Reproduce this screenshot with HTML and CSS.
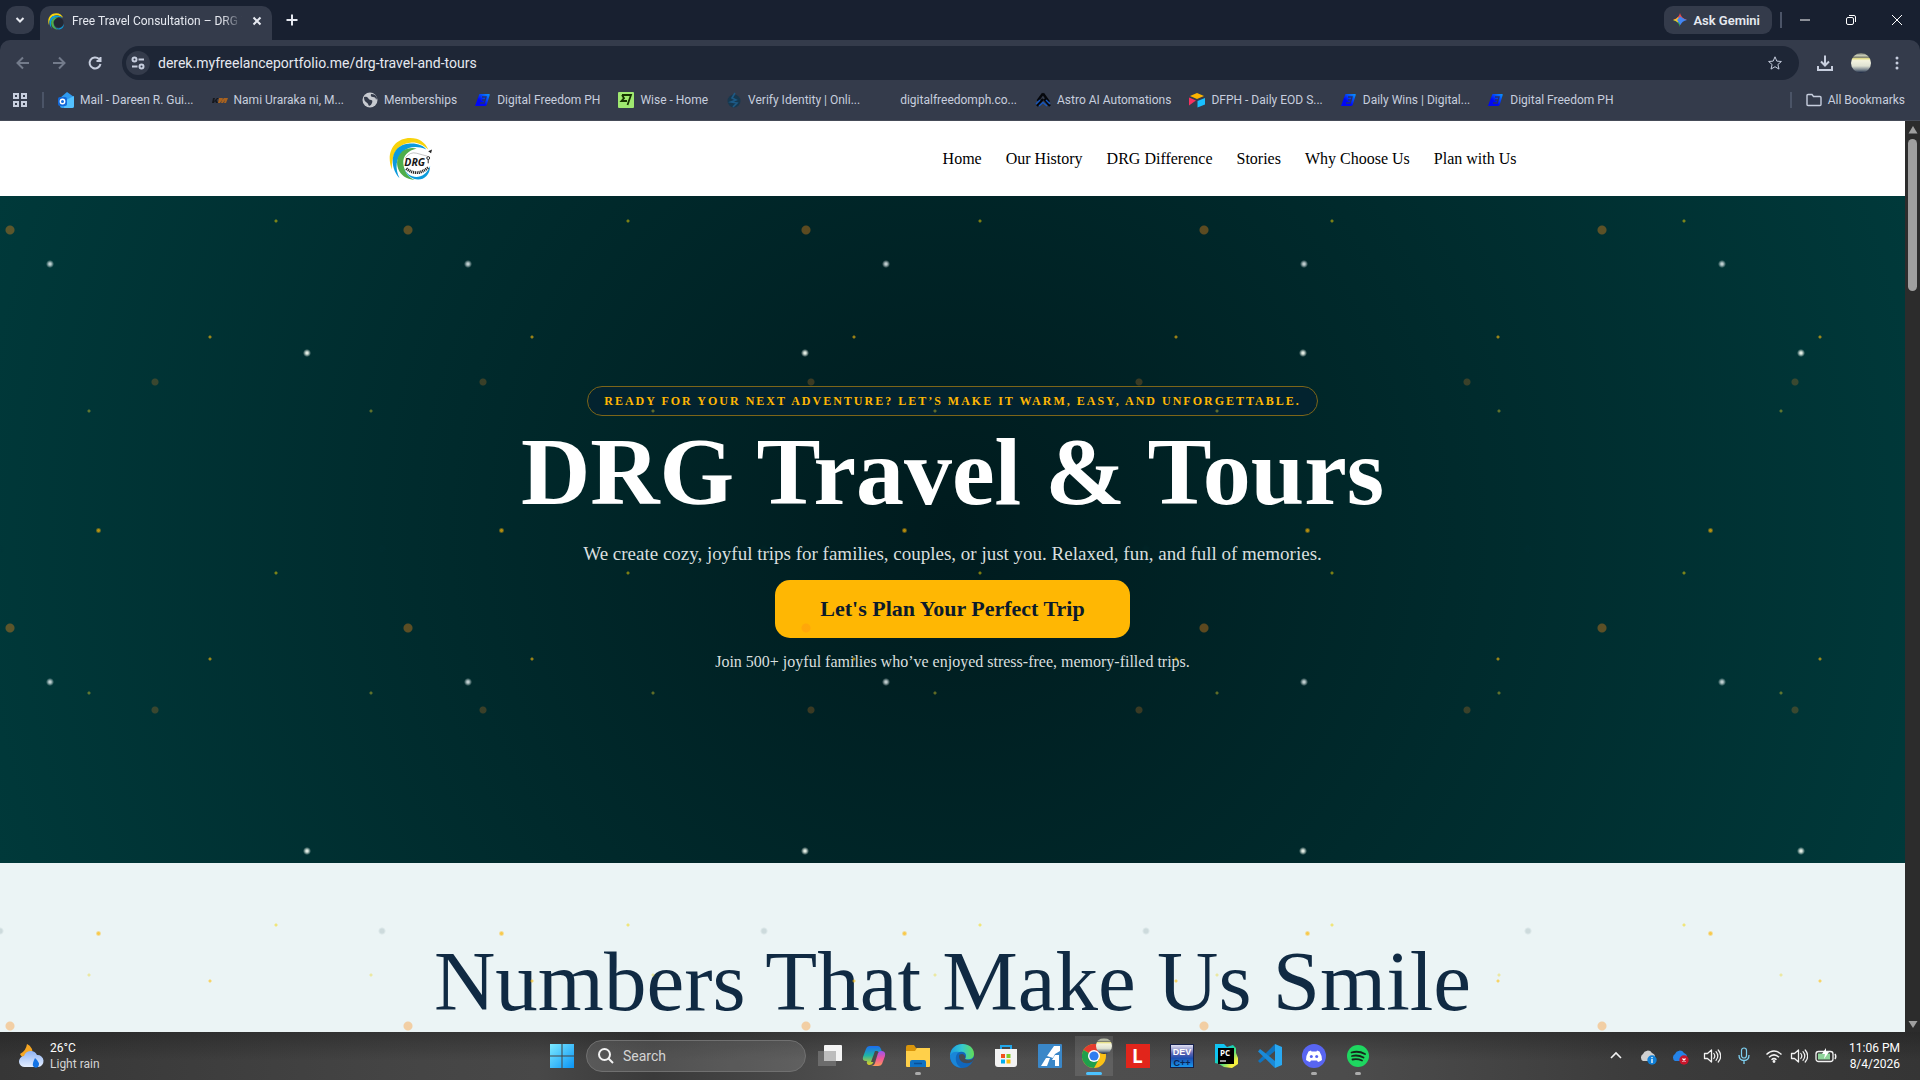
FILE: index.html
```html
<!DOCTYPE html>
<html lang="en">
  <head>
    <meta charset="utf-8">
    <title>Free Travel Consultation – DRG Travel &amp; Tours</title>
    <meta name="viewport" content="width=device-width, initial-scale=1">
    <link rel="stylesheet" href="styles.css">
  </head>
  <body>
    <!-- shared shapes -->
    <svg class="defs" width="0" height="0">
      <defs>
        <linearGradient id="blue" x1="0" y1="1" x2="1" y2="0"><stop offset=".4" stop-color="#0008f5"/><stop offset="1" stop-color="#0a9bff"/></linearGradient>
        <linearGradient id="win" x1="0" y1="0" x2="1" y2="1"><stop offset="0" stop-color="#7deaff"/><stop offset="1" stop-color="#0a94f5"/></linearGradient>
        <linearGradient id="planet" x1="0" y1="0" x2="0" y2="1"><stop offset="0" stop-color="#6d7168"/><stop offset=".12" stop-color="#c9cdb8"/><stop offset=".22" stop-color="#7d8070"/><stop offset=".28" stop-color="#e6e08a"/><stop offset=".38" stop-color="#f3f3df"/><stop offset=".65" stop-color="#dfe2d2"/><stop offset=".85" stop-color="#76828c"/><stop offset="1" stop-color="#14203c"/></linearGradient>
        <linearGradient id="cloud" x1="0" y1="0" x2="0" y2="1"><stop offset="0" stop-color="#8fb4f5"/><stop offset="1" stop-color="#e4eeff"/></linearGradient>
        <linearGradient id="edge" x1="0" y1="0" x2="1" y2="0"><stop offset="0" stop-color="#1b9de2"/><stop offset=".5" stop-color="#35c7d0"/><stop offset="1" stop-color="#62dd55"/></linearGradient>
        <linearGradient id="cop1" x1="0" y1="0" x2="0" y2="1"><stop offset="0" stop-color="#1c6cf0"/><stop offset=".5" stop-color="#1fb5a6"/><stop offset="1" stop-color="#e6cf1b"/></linearGradient>
        <linearGradient id="cop2" x1="0" y1="0" x2="0" y2="1"><stop offset="0" stop-color="#9a54f0"/><stop offset=".5" stop-color="#f0569a"/><stop offset="1" stop-color="#ff9a5a"/></linearGradient>
        <linearGradient id="dev" x1="0" y1="0" x2="0" y2="1"><stop offset="0" stop-color="#e8e8f8"/><stop offset=".4" stop-color="#5a62b0"/><stop offset=".6" stop-color="#1b4fb0"/><stop offset="1" stop-color="#1a9cf0"/></linearGradient>
        <linearGradient id="pyc" x1="0" y1="0" x2="1" y2="1"><stop offset=".3" stop-color="#10c4f2"/><stop offset=".5" stop-color="#20d890"/><stop offset=".8" stop-color="#f6f040"/></linearGradient>
        <symbol id="df" viewBox="0 0 16 16">
          <path d="M5 2h9q1 0 .7 1l-3 10q-.5 1-2 1H0L4 3q.3-1 1-1z" fill="url(#blue)"/>
          <path d="M7 5h4l-.8 3H7m3 0-.8 3H5" fill="none" stroke="#25306e" stroke-width="1.400"/>
        </symbol>
        <symbol id="speaker" viewBox="0 0 18 18">
          <path d="M1.500 6.500h3L8.500 3v12l-4-3.500h-3z" fill="none" stroke="#f2f2f2" stroke-width="1.300" stroke-linejoin="round"/>
          <path d="M10.800 6.500q2 2.500 0 5M13 4.700q3.600 4.300 0 8.600M15.200 3q5 6 0 12" fill="none" stroke="#f2f2f2" stroke-width="1.200" stroke-linecap="round"/>
        </symbol>
        <symbol id="swirl" viewBox="0 0 46 46">
          <path d="M3 34C-4 16 6 1 22 1c10 0 16 5 19 12C34 7 28 5 22 6 8 8 3 18 3 34z" fill="#f8d30c"/>
          <path d="M11 43C0 31 1 9 20 7c9-1 16 2 19 6-10-4-18-3-24 2-8 7-9 18-4 28z" fill="#0c9bdc"/>
          <path d="M27 45C9 44 3 25 14 15c5-4 11-4 15-3-9 2-15 8-14 16 1 9 6 15 12 17z" fill="#4fae4b"/>
          <path d="M15 31c5 14 22 15 28-1 0 18-22 20-28 1z" fill="#0c9bdc"/>
        </symbol>
      </defs>
    </svg>

    <header class="browser">
      <div class="tabs">
        <button class="tab-search" aria-label="Search tabs"><svg width="10" height="10" viewBox="0 0 10 10"><path d="M1.500 3 5 6.500 8.500 3"/></svg></button>
        <div class="tab">
          <svg class="tab-icon" width="17" height="17" viewBox="0 0 46 46"><circle cx="29" cy="26" r="13" fill="#232833"/><use href="#swirl"/></svg>
          <span class="tab-title">Free Travel Consultation – DRG Travel</span>
          <button class="tab-close" aria-label="Close tab"><svg width="10" height="10" viewBox="0 0 10 10"><path d="m1.500 1.500 7 7m0-7-7 7"/></svg></button>
        </div>
        <button class="tab-new" aria-label="New tab"><svg width="12" height="12" viewBox="0 0 12 12"><path d="M6 .500v11M.500 6h11"/></svg></button>
        <div class="window-controls">
          <button class="gemini">
            <svg width="14" height="14" viewBox="0 0 14 14"><path d="M7 0q1 5 7 7H0q6-2 7-7z" fill="#ea4a4a"/><path d="M0 7h7v7q-1-5-7-7z" fill="#34a853"/><path d="M0 7q4-1 5-3l2 3-2 2.500Q3 7.500 0 7z" fill="#f5c02c"/><path d="M7 3.500 9.500 5q2 1.500 4.500 2-5 1-6.500 5L4 7z" fill="#4285f4"/></svg>
            Ask Gemini
          </button>
          <i class="divider"></i>
          <button class="win" aria-label="Minimize"><svg width="12" height="12" viewBox="0 0 12 12"><path d="M1 6h10"/></svg></button>
          <button class="win" aria-label="Restore"><svg width="12" height="12" viewBox="0 0 12 12"><rect x="1.500" y="3.500" width="7" height="7" rx="1.500"/><path d="M4 1.500h5q1.500 0 1.500 1.500v5"/></svg></button>
          <button class="win" aria-label="Close"><svg width="12" height="12" viewBox="0 0 12 12"><path d="m1 1 10 10M11 1 1 11"/></svg></button>
        </div>
      </div>

      <div class="toolbar">
        <button class="tool dim" aria-label="Back"><svg width="16" height="16" viewBox="0 0 16 16"><path d="M14 8H3m5-5.500L2.500 8 8 13.500"/></svg></button>
        <button class="tool dim" aria-label="Forward"><svg width="16" height="16" viewBox="0 0 16 16"><path d="M2 8h11M8 2.500 13.500 8 8 13.500"/></svg></button>
        <button class="tool" aria-label="Reload"><svg width="16" height="16" viewBox="0 0 16 16"><path d="M13.500 9A5.500 5.500 0 1 1 12 4l1.500 1.500M13.500 2v4h-4"/></svg></button>
        <div class="address">
          <button class="site-info" aria-label="Site information"><svg width="16" height="16" viewBox="0 0 16 16"><circle cx="4.500" cy="4.500" r="2"/><path d="M8.500 4.500H14M2 11.500h5.500"/><circle cx="11.500" cy="11.500" r="2"/></svg></button>
          <input type="text" aria-label="Address" value="derek.myfreelanceportfolio.me/drg-travel-and-tours">
          <button class="tool star" aria-label="Bookmark this tab"><svg width="16" height="16" viewBox="0 0 16 16"><path d="m8 1.800 1.800 4.300 4.600.4-3.500 3 1.100 4.600L8 11.700l-4 2.400 1.100-4.600-3.500-3 4.600-.4z"/></svg></button>
        </div>
        <div class="actions">
          <button class="tool" aria-label="Downloads"><svg width="18" height="18" viewBox="0 0 18 18"><path d="M9 1.500v9.500M5 7.500l4 4 4-4M2 12v4h14v-4"/></svg></button>
          <button class="tool" aria-label="Profile"><svg width="20" height="20" viewBox="0 0 20 20"><circle cx="10" cy="10" r="10" fill="url(#planet)" stroke="none"/></svg></button>
          <button class="tool" aria-label="Menu"><svg width="16" height="16" viewBox="0 0 16 16"><g fill="#c7cede" stroke="none"><circle cx="8" cy="3" r="1.500"/><circle cx="8" cy="8" r="1.500"/><circle cx="8" cy="13" r="1.500"/></g></svg></button>
        </div>
      </div>

      <nav class="bookmarks" aria-label="Bookmarks">
        <button class="apps" aria-label="Apps"><svg width="14" height="14" viewBox="0 0 14 14"><path d="M1 1h4v4H1zM9 1h4v4H9zM1 9h4v4H1zM9 9h4v4H9z"/></svg></button>
        <i class="divider"></i>
        <a href="#"><svg viewBox="0 0 16 16"><path d="M2 6 9 0l7 5v9q0 2-2 2H4q-2 0-2-2z" fill="#2f9bf0"/><path d="m8 8 8-4v10q0 2-2 2H6z" fill="#53c1ff"/><rect y="5" width="9" height="9" rx="2" fill="#1268d8"/><circle cx="4.500" cy="9.500" r="2.200" fill="none" stroke="#fff" stroke-width="1.400"/></svg><span>Mail - Dareen R. Gui...</span></a>
        <a href="#"><svg viewBox="0 0 16 16"><path d="M1 6h2l-1 3 3-3h2L4.500 8 6 11H4L3 9l-1 2H0z" fill="#15171c"/><path d="M7 6h4l-1 2 2-2h4l-2 5h-2l1-3-2 3H9l1-3-2 3H6z" fill="#a8621f"/></svg><span>Nami Uraraka ni, M...</span></a>
        <a href="#"><svg viewBox="0 0 16 16"><circle cx="8" cy="8" r="7.500" fill="#c7cad0"/><path d="M2 5q3-1 4 1t3 2 1 3-3 3q-1-3-3-4T2 5zM9 2q-1 3 2 3t3 3l1-2q-1-4-6-4z" fill="#343b4b"/></svg><span>Memberships</span></a>
        <a href="#"><svg><use href="#df"/></svg><span>Digital Freedom PH</span></a>
        <a href="#"><svg viewBox="0 0 16 16"><rect width="16" height="16" rx="1" fill="#9fe870"/><path d="M4 3h9l-3.500 10M4 3l2 3.200L3.500 9H9" fill="none" stroke="#163300" stroke-width="1.800"/></svg><span>Wise - Home</span></a>
        <a href="#"><svg viewBox="0 0 16 16"><circle cx="8" cy="9" r="6.500" fill="#17384f"/><path d="M9 1 6 6l4 2-5 2 6 1-4 4" fill="none" stroke="#1d5a86" stroke-width="1.600"/></svg><span>Verify Identity | Onli...</span></a>
        <a href="#"><svg></svg><span>digitalfreedomph.co...</span></a>
        <a href="#"><svg viewBox="0 0 16 16"><path d="M8 1.500 2.500 9M8 1.500 14 10M8 7l-6 7M9 7l6 7" fill="none" stroke="#05070c" stroke-width="2.400"/><path d="m1 12 4-4m-1 6 4-3.500 4 3.500m-1-6 4 4" fill="none" stroke="#1557c0" stroke-width="1.400"/></svg><span>Astro AI Automations</span></a>
        <a href="#"><svg viewBox="0 0 16 16"><path d="m1 4 7-3 7 3-7 3z" fill="#fcb400"/><path d="M0 5.500 7 8.500l-7 5z" fill="#f8305f"/><path d="m8.500 9 7.500-3v6.500l-7.500 3z" fill="#18bfff"/></svg><span>DFPH - Daily EOD S...</span></a>
        <a href="#"><svg><use href="#df"/></svg><span>Daily Wins | Digital...</span></a>
        <a href="#"><svg><use href="#df"/></svg><span>Digital Freedom PH</span></a>
        <i class="divider push"></i>
        <a class="all" href="#"><svg viewBox="0 0 16 16"><path d="M1 3.500q0-1 1-1h4l1.500 2H14q1 0 1 1v7q0 1-1 1H2q-1 0-1-1z" fill="none" stroke="#c7cede" stroke-width="1.400"/></svg><span>All Bookmarks</span></a>
      </nav>
    </header>

    <div class="viewport">
      <div class="page">
        <div class="site-header">
          <div class="container">
            <a class="logo" href="#" aria-label="DRG Travel and Tours">
              <svg width="44" height="44" viewBox="0 0 46 46">
                <use href="#swirl"/>
                <path d="M17 22q5-7 12-5t11 3" fill="none" stroke="#999" stroke-width=".6"/>
                <text class="logo-name" x="16" y="30">DRG</text>
                <path d="M18 33q11 9 23-1" fill="none" stroke="#222" stroke-width="3" stroke-dasharray="1.200 .8"/>
                <circle cx="41" cy="22" r="1.500" fill="none" stroke="#222"/><path d="M41 23.500v4" stroke="#222"/><path d="m41 15 4-2-1 4z" fill="#222"/>
              </svg>
            </a>
            <nav class="menu">
              <a href="#">Home</a>
              <a href="#">Our History</a>
              <a href="#">DRG Difference</a>
              <a href="#">Stories</a>
              <a href="#">Why Choose Us</a>
              <a href="#">Plan with Us</a>
            </nav>
          </div>
        </div>

        <section class="hero">
          <p class="badge">Ready for your next adventure? Let’s make it warm, easy, and unforgettable.</p>
          <h1>DRG Travel &amp; Tours</h1>
          <p class="lead">We create cozy, joyful trips for families, couples, or just you. Relaxed, fun, and full of memories.</p>
          <button class="cta">Let's Plan Your Perfect Trip</button>
          <p class="note">Join 500+ joyful families who’ve enjoyed stress-free, memory-filled trips.</p>
        </section>

        <section class="numbers">
          <h2>Numbers That Make Us Smile</h2>
        </section>
      </div>
      <div class="scrollbar">
        <svg width="10" height="10" viewBox="0 0 10 10"><path d="M5 1 9.500 8.500h-9z"/></svg>
        <div class="thumb"></div>
        <svg class="down" width="10" height="10" viewBox="0 0 10 10"><path d="M5 9 9.500 2h-9z"/></svg>
      </div>
    </div>

    <footer class="taskbar">
      <button class="weather">
        <svg width="26" height="26" viewBox="0 0 26 26">
          <path d="M9 1q-1 7-7 10 2 5 8 4 6-4 4-9-2-4-5-5z" fill="#f5a623"/>
          <path d="M7 24a5.500 5.500 0 0 1-1-11 7 7 0 0 1 13-1 6 6 0 0 1 1 12z" fill="url(#cloud)"/>
          <path d="M17 15q6 5 3 9-3 2-5-1-1-2 2-8z" fill="#1273e6"/>
        </svg>
        <span class="weather-text"><b>26°C</b><span>Light rain</span></span>
      </button>

      <div class="dock">
        <button aria-label="Start"><svg viewBox="0 0 24 24"><path d="M0 0h11.500v11.500H0zM12.500 0H24v11.500H12.500zM0 12.500h11.500V24H0zM12.500 12.500H24V24H12.500z" fill="url(#win)"/></svg></button>
        <label class="search">
          <svg width="16" height="16" viewBox="0 0 16 16"><circle cx="6.500" cy="6.500" r="5.500"/><path d="m10.500 10.500 4.500 4.500"/></svg>
          <input type="search" placeholder="Search">
        </label>
        <button aria-label="Task view"><svg viewBox="0 0 24 24"><rect x="6" y="1" width="18" height="16" rx="1" fill="#f5f5f5"/><path d="M0 7h18v15H0z" fill="#777" opacity=".75"/><path d="M6 7h12v10H6z" fill="#bdbdbd"/></svg></button>
        <button aria-label="Copilot"><svg viewBox="0 0 24 24"><path d="M8 2h8q2 0 3 3l1 3h-5L11 19q-1 2-4 2-3-1-2-4H4q-4 0-3-4L4 5q1-3 4-3z" fill="url(#cop1)"/><path d="M16 22H9q3 0 4-3l3-10q1-2 3-2 5 0 4 5l-3 8q-1 2-4 2z" fill="url(#cop2)"/><path d="M13 7h3L12 18H9z" fill="#4a4a4a"/></svg></button>
        <button class="open" aria-label="File Explorer"><svg viewBox="0 0 24 24"><path d="M0 3q0-2 2-2h6l2 3h12q2 0 2 2v4H0z" fill="#d9950b"/><path d="M0 7h9l2-3h13v18q0 1-1 1H1q-1 0-1-1z" fill="#ffd04a"/><path d="M4 23v-5q0-2 2-2h12q2 0 2 2v5z" fill="#0f72c4"/><path d="M8 19.500h8" stroke="#0a4f96" stroke-width="1.500"/></svg></button>
        <button aria-label="Edge"><svg viewBox="0 0 24 24"><circle cx="12" cy="12" r="12" fill="#1167bd"/><path d="M0 12C1-4 24-3 24 10c0 5-5 6-9 5 3-5-1-8-5-7-6 0-9 3-10 4z" fill="url(#edge)"/><path d="M9 12c0 6 6 9 13 6l2-3q1-1 0-2c-2 4-6 4-9 2 1-3-1-5-3-5q-3 0-3 2z" fill="#454b52"/><path d="M0 12c1-4 5-5 9-4-5 3-4 13 2 15.500C5 24 0 18 0 12z" fill="#1a86d8"/></svg></button>
        <button aria-label="Store"><svg viewBox="0 0 24 24"><path d="M7 6V2h10v4" fill="none" stroke="#21a6ea" stroke-width="2"/><path d="M1 5h22v15q0 3-3 3H4q-3 0-3-3z" fill="#f3f3f3"/><path d="M7 10h4v4H7z" fill="#f1511b"/><path d="M12.500 10h4v4h-4z" fill="#80cc28"/><path d="M7 15.500h4v4H7z" fill="#00adef"/><path d="M12.500 15.500h4v4h-4z" fill="#fbbc09"/></svg></button>
        <button aria-label="Drafting"><svg viewBox="0 0 24 24"><rect width="24" height="24" rx="1" fill="#3a87c8"/><path d="m3 22 5-8h4l-3 8zM9 12 16 2h6v5l-5 3-2 4z" fill="#fff"/><path d="m14 16 3-5h4v11h-4v-6z" fill="#fff"/></svg></button>
        <button class="active" aria-label="Chrome"><svg viewBox="0 0 24 24"><circle cx="12" cy="12" r="12" fill="#fbc116"/><path d="M1.600 6A12 12 0 0 1 22.400 6L12 12z" fill="#e33b2e"/><path d="M22.400 6H12v6z" fill="#e33b2e"/><path d="M1.600 6A12 12 0 0 0 12 24l5-9-5-3z" fill="#1fa04c"/><circle cx="12" cy="12" r="6" fill="#fff"/><circle cx="12" cy="12" r="4.600" fill="#2f7df0"/></svg><svg class="profile" viewBox="0 0 20 20"><circle cx="10" cy="10" r="10" fill="url(#planet)"/></svg></button>
        <button aria-label="L"><svg viewBox="0 0 24 24"><path d="M0 0h24v24H0z" fill="#e1251b"/><text x="6" y="19" class="glyph-l">L</text></svg></button>
        <button aria-label="Dev-C++"><svg viewBox="0 0 24 24"><rect x=".5" y=".5" width="23" height="23" fill="url(#dev)" stroke="#15204a"/><text x="12" y="11" class="glyph-dev">DEV</text><text x="12" y="22" class="glyph-cpp">C++</text></svg></button>
        <button aria-label="PyCharm"><svg viewBox="0 0 24 24"><path d="M1 0h9l3 3 6-2 3 3v5l2 5v6l-6 4-8-1-5-3-4-1z" fill="url(#pyc)"/><path d="M4 4h16v16H4z" fill="#000"/><text x="6" y="12" class="glyph-pc">PC</text><path d="M6 17h6" stroke="#fff" stroke-width="1.200"/></svg></button>
        <button aria-label="Visual Studio Code"><svg viewBox="0 0 24 24"><path d="m17 0 7 3v18l-7 3z" fill="#29a9f2"/><path d="M17 0v7L4 17.500 2 19l-2-2z" fill="#0f74c0"/><path d="M17 24v-7L4 6.500 2 5 0 7.500z" fill="#1a8ad8"/></svg></button>
        <button class="open" aria-label="Discord"><svg viewBox="0 0 24 24"><circle cx="12" cy="12" r="12" fill="#5865f2"/><path d="M9 6.500 6.500 7.500Q4 11.500 4 16q2 1.500 4 2l1-1.500h6l1 1.500q2-.5 4-2 0-4.500-2.500-8.500L15 6.500l-.5 1h-5z" fill="#fff"/><circle cx="9.300" cy="12.500" r="1.500" fill="#5865f2"/><circle cx="14.700" cy="12.500" r="1.500" fill="#5865f2"/></svg></button>
        <button class="open" aria-label="Spotify"><svg viewBox="0 0 24 24"><circle cx="12" cy="12" r="11" fill="#1ed760"/><path d="M5.500 8.500q7-2 13.500 1.500M6 12q6-1.500 11.500 1.500M6.500 15.500q5-1 9.500 1" fill="none" stroke="#16261b" stroke-width="1.800" stroke-linecap="round"/></svg></button>
      </div>

      <div class="tray">
        <button aria-label="Hidden icons"><svg viewBox="0 0 18 18"><path d="m4 11 5-5 5 5" fill="none" stroke="#f2f2f2" stroke-width="1.600"/></svg></button>
        <button aria-label="Cloud sync"><svg viewBox="0 0 18 18"><path d="M4 14a4 4 0 0 1 0-7 5 5 0 0 1 9-1q3 1 3 4t-3 4z" fill="#d0d0d0"/><circle cx="13" cy="13" r="4.700" fill="#1080d8"/><path d="M13 12v4m0-6v1.200" stroke="#fff" stroke-width="1.300"/></svg></button>
        <button aria-label="OneDrive"><svg viewBox="0 0 18 18"><path d="M4 14a4 4 0 0 1 0-7 5 5 0 0 1 9-1q3 1 3 4t-3 4z" fill="#2483e8"/><circle cx="13" cy="13" r="4.700" fill="#c8152b"/><path d="m11.500 11.500 3 3m0-3-3 3" stroke="#fff" stroke-width="1.200"/></svg></button>
        <button aria-label="Sound"><svg><use href="#speaker"/></svg></button>
        <button aria-label="Microphone"><svg viewBox="0 0 18 18"><rect x="6.500" y="1" width="5" height="10" rx="2.500" fill="none" stroke="#7fd0f0" stroke-width="1.200"/><path d="M4 8q0 5.500 5 5.500T14 8M9 13.500V17" fill="none" stroke="#7fd0f0" stroke-width="1.300"/></svg></button>
        <button class="status" aria-label="Network, volume and battery">
          <svg viewBox="0 0 18 18"><path d="M1.500 7.500q7.500-7 15 0M4 10.200q5-4.600 10 0M6.500 12.800q2.500-2.300 5 0" fill="none" stroke="#f2f2f2" stroke-width="1.500"/><circle cx="9" cy="14.500" r="1.400" fill="#f2f2f2"/></svg>
          <svg><use href="#speaker"/></svg>
          <svg class="battery" viewBox="0 0 22 18"><rect x="1" y="4.500" width="17" height="10" rx="2.500" fill="none" stroke="#f2f2f2" stroke-width="1.300"/><path d="M3 6.500h12v6H3z" fill="#8fd49a"/><path d="M20 7q1.500 2.500 0 5" stroke="#f2f2f2" fill="none" stroke-width="1.500"/><path d="m11 1-4 6h3l-1 5 5-7h-3z" fill="#fff"/></svg>
        </button>
        <button class="clock"><span>11:06 PM</span><span>8/4/2026</span></button>
      </div>
    </footer>
  </body>
</html>
```
FILE: styles.css
```css
* {
  box-sizing: border-box;
}
body {
  margin: 0;
  height: 100vh;
  overflow: hidden;
  display: flex;
  flex-direction: column;
  font-family: Roboto, 'Open Sans', sans-serif;
  font-size: 12px;
  color: #e6e9f0;
  background: #182030;
}
button {
  display: flex;
  align-items: center;
  justify-content: center;
  padding: 0;
  border: 0;
  background: none;
  color: inherit;
  font: inherit;
}
input {
  min-width: 0;
  flex: 1;
  padding: 0;
  border: 0;
  outline: 0;
  background: none;
  color: inherit;
  font: inherit;
}
a {
  color: inherit;
  text-decoration: none;
}
svg {
  display: block;
  flex: none;
}
p, h1, h2 {
  margin: 0;
}
.defs {
  position: absolute;
}
.divider {
  width: 2px;
  height: 16px;
  background: #4b5467;
}

/* browser */
.tabs {
  display: flex;
  align-items: center;
  height: 40px;
  padding-left: 6px;
}
.tabs svg path {
  fill: none;
  stroke: #e6e9f0;
  stroke-width: 2px;
}
.tab-search {
  width: 28px;
  height: 28px;
  border-radius: 10px;
  background: #343b4b;
}
.tab {
  display: flex;
  align-items: center;
  align-self: flex-end;
  width: 232px;
  height: 34px;
  margin-left: 6px;
  padding: 0 10px 4px 8px;
  border-radius: 10px 10px 0 0;
  background: #343b4b;
}
.tabs .tab-icon path {
  fill: revert-layer;
  stroke: none;
}
.tab-title {
  flex: 1;
  margin: 0 10px 0 7px;
  overflow: hidden;
  white-space: nowrap;
  -webkit-mask-image: linear-gradient(90deg, #000 88%, transparent);
          mask-image: linear-gradient(90deg, #000 88%, transparent);
}
.tab-new {
  width: 28px;
  height: 28px;
  margin-left: 6px;
}
.window-controls {
  display: flex;
  align-items: center;
  margin-left: auto;
}
.gemini {
  gap: 6px;
  height: 28px;
  padding: 0 12px 0 9px;
  margin-right: 8px;
  border-radius: 9px;
  background: #343b4b;
  font-size: 13px;
  font-weight: 600;
}
.tabs .gemini path {
  fill: revert-layer;
  stroke: none;
}
.win {
  width: 46px;
  height: 40px;
}
.tabs .win path,
.tabs .win rect {
  fill: none;
  stroke: #fff;
  stroke-width: 1px;
}
.toolbar {
  display: flex;
  align-items: center;
  height: 46px;
  padding: 0 5px;
  border-radius: 10px 10px 0 0;
  background: #343b4b;
}
.tool {
  width: 36px;
  height: 34px;
}
.toolbar svg {
  stroke: #c7cede;
  stroke-width: 2px;
  fill: none;
}
.toolbar .dim svg {
  stroke: #737b8b;
}
.address {
  flex: 1;
  display: flex;
  align-items: center;
  height: 34px;
  margin-left: 9px;
  padding: 0 6px 0 4px;
  border-radius: 17px;
  background: #1e2636;
  font-size: 14px;
}
.address .star svg {
  stroke-width: 1px;
}
.site-info {
  width: 24px;
  height: 24px;
  margin-right: 8px;
  border-radius: 12px;
  background: #343b4b;
}
.actions {
  display: flex;
  margin-left: 8px;
}
.bookmarks {
  display: flex;
  align-items: center;
  height: 35px;
  padding: 0 15px 6px 13px;
  background: #343b4b;
  border-bottom: 1px solid #454b58;
  color: #c7cede;
  white-space: nowrap;
}
.bookmarks a {
  display: flex;
  align-items: center;
  gap: 6px;
  margin-right: 18px;
}
.bookmarks a svg {
  width: 16px;
  height: 16px;
}
.apps svg {
  fill: none;
  stroke: #c7cede;
  stroke-width: 2px;
}
.bookmarks .divider {
  margin: 0 14px 0 15px;
}
.bookmarks .push {
  margin-left: auto;
}
.bookmarks .all {
  margin-right: 0;
}

/* page */
.viewport {
  flex: 1;
  display: flex;
  min-height: 0;
}
.page {
  position: relative;
  flex: 1;
  overflow: hidden;
  background: #ebf4f5;
  font-family: 'Liberation Serif', serif;
}
/* confetti dots, every layer repeats at its own pace */
.page::after {
  content: '';
  position: absolute;
  top: 0;
  left: 0;
  right: 0;
  bottom: 0;
  pointer-events: none;
  background-image:
    radial-gradient(circle, rgba(255, 140, 20, .36) 4px, transparent 5px),
    radial-gradient(circle, rgba(235, 244, 245, .8) 1px, transparent 4px),
    radial-gradient(circle, rgba(235, 244, 235, .95) 1px, transparent 4px),
    radial-gradient(circle, rgba(255, 183, 3, .7) 1px, transparent 3px),
    radial-gradient(circle, rgba(245, 215, 0, .5) 1px, transparent 2px),
    radial-gradient(circle, rgba(255, 190, 10, .6) 1px, transparent 2px),
    radial-gradient(circle, rgba(230, 130, 30, .25) 3px, transparent 4px),
    radial-gradient(circle, rgba(235, 215, 40, .4) 1px, transparent 2px),
    radial-gradient(circle, rgba(0, 48, 55, .13) 2px, transparent 4px);
  background-size:
    398px 398px,
    418px 418px,
    498px 498px,
    403px 403px,
    352px 352px,
    322px 322px,
    328px 328px,
    282px 282px,
    382px 382px;
  background-position:
    209px 308px,
    259px 352px,
    58px -17px,
    300px 208px,
    100px 276px,
    49px 55px,
    319px 97px,
    230px 149px,
    191px 237px;
}
.site-header {
  position: relative;
  z-index: 1;
  background: #fff;
  color: #000;
}
.container {
  display: flex;
  align-items: center;
  justify-content: space-between;
  max-width: 1140px;
  height: 75px;
  margin: 0 auto;
  padding: 0 6px;
}
.logo-name {
  font: italic bold 11px 'Open Sans', sans-serif;
  fill: #181818;
}
.menu {
  display: flex;
  gap: 24px;
  font-size: 16px;
}
.hero {
  display: flex;
  flex-direction: column;
  align-items: center;
  justify-content: center;
  height: 667px;
  background: radial-gradient(circle, #001b1e, #00393a);
  color: #d9dfdf;
  text-align: center;
}
.badge {
  padding: 0 16px;
  border: 1px solid #7c6519;
  border-radius: 15px;
  background: #03232f;
  color: #ffb703;
  font-size: 12px;
  font-weight: bold;
  line-height: 28px;
  letter-spacing: 2px;
  text-transform: uppercase;
}
.hero h1 {
  color: #fff;
  font-size: 96px;
  line-height: 112px;
}
.lead {
  margin: 12px 0;
  font-size: 19px;
  line-height: 28px;
}
.cta {
  height: 58px;
  padding: 0 45px;
  border-radius: 15px;
  background: #ffb703;
  color: #0c1a2b;
  font-size: 22px;
  font-weight: bold;
}
.note {
  margin-top: 12px;
  font-size: 16px;
  line-height: 24px;
}
.numbers {
  padding-top: 68px;
  color: #102a43;
  text-align: center;
}
.numbers h2 {
  font-size: 85px;
  font-weight: normal;
  line-height: 100px;
}
.scrollbar {
  display: flex;
  flex-direction: column;
  align-items: center;
  width: 15px;
  padding: 4px 0 3px;
  background: #2c2c2c;
}
.scrollbar path {
  fill: #9f9f9f;
}
.thumb {
  width: 9px;
  height: 152px;
  margin-top: 4px;
  border-radius: 5px;
  background: #9f9f9f;
}
.down {
  margin-top: auto;
}

/* taskbar */
.taskbar {
  display: grid;
  grid-template-columns: 1fr auto 1fr;
  height: 48px;
  background:
    linear-gradient(rgba(20, 20, 20, .35), transparent 60%),
    linear-gradient(90deg, #363636, #444 20%, #484848 28%, #3a3a3a 34%, #505050 45%, #4c4c4c 70%, #3c3c3c 85%, #353535);
}
.weather {
  justify-self: start;
  gap: 6px;
  padding-left: 18px;
}
.weather-text {
  display: flex;
  flex-direction: column;
  line-height: 16px;
  text-align: left;
  color: #d4d4d4;
}
.weather-text b {
  color: #fff;
  font-weight: normal;
}
.dock {
  display: flex;
}
.dock button {
  position: relative;
  width: 44px;
}
.dock button svg {
  width: 24px;
  height: 24px;
}
.dock .active {
  background: linear-gradient(rgba(255, 255, 255, .1), rgba(255, 255, 255, .1)) center / 38px 40px no-repeat;
}
.dock .active .profile {
  position: absolute;
  top: 6px;
  right: 4px;
  width: 16px;
  height: 16px;
}
.dock .open::after,
.dock .active::after {
  content: '';
  position: absolute;
  bottom: 5px;
  left: 19px;
  width: 6px;
  height: 3px;
  border-radius: 2px;
  background: #ababab;
}
.dock .active::after {
  left: 14px;
  width: 16px;
  background: #4cc2ff;
}
.search {
  display: flex;
  align-items: center;
  gap: 9px;
  width: 220px;
  height: 32px;
  margin: 8px 2px;
  padding: 0 11px;
  border: 1px solid #707070;
  border-radius: 16px;
  background: rgba(255, 255, 255, .12);
  font-size: 14px;
}
.search svg {
  fill: none;
  stroke: #f2f2f2;
  stroke-width: 2px;
}
.search input::placeholder {
  color: #d4d4d4;
  opacity: 1;
}
.glyph-l {
  font: bold 19px 'Open Sans', sans-serif;
  fill: #fff;
}
.glyph-dev,
.glyph-cpp {
  font: bold 9px 'Liberation Sans', sans-serif;
  text-anchor: middle;
  fill: #fff;
}
.glyph-cpp {
  fill: #0b2450;
}
.glyph-pc {
  font: bold 8px 'Open Sans', sans-serif;
  fill: #fff;
}
.tray {
  display: flex;
  justify-content: flex-end;
  padding-right: 20px;
}
.tray button {
  width: 32px;
}
.tray svg {
  width: 18px;
  height: 18px;
}
.tray .status {
  width: 82px;
  gap: 7px;
}
.tray .battery {
  width: 22px;
}
.tray .clock {
  width: 58px;
  flex-direction: column;
  align-items: flex-end;
  line-height: 16px;
  color: #fff;
}
```
